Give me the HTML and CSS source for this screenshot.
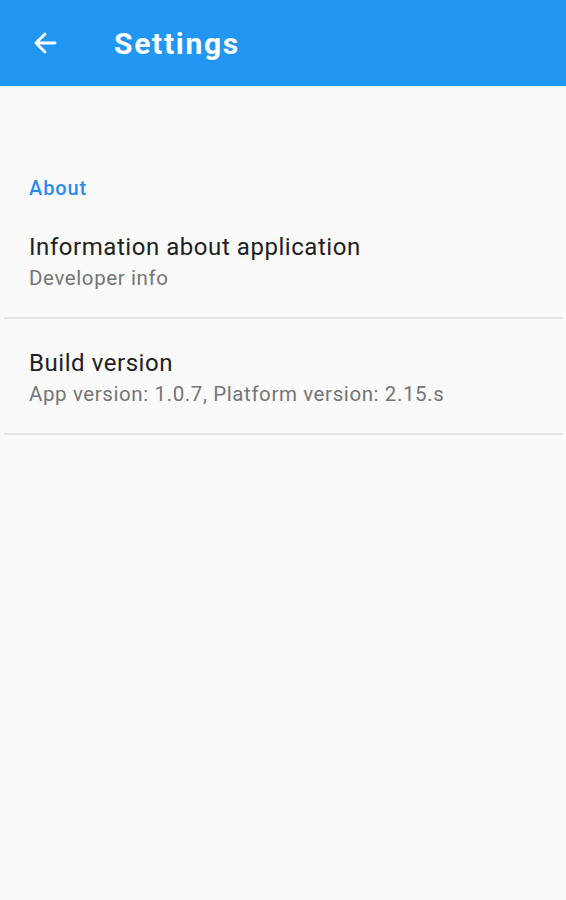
FILE: index.html
```html
<!DOCTYPE html>
<html>
<head>
  <meta charset="UTF-8">
  <meta name="viewport" content="width=device-width, initial-scale=1.0">
  <title>Settings</title>
  <link rel="stylesheet" href="styles.css">
</head>
<body>
  <div class="toolbar">
    <button class="back-btn" aria-label="Back">
      <svg width="32" height="32" viewBox="0 0 24 24">
        <path d="M19.5 12H5.2M12 5.2L5.2 12l6.8 6.8" fill="none" stroke="#fff" stroke-width="2.1" stroke-linecap="round" stroke-linejoin="round"/>
      </svg>
    </button>
    <h1>Settings</h1>
  </div>

  <div class="content">
    <div class="section-title">About</div>

    <div class="pref-item">
      <div class="pref-title">Information about application</div>
      <div class="pref-summary">Developer info</div>
    </div>

    <div class="pref-item">
      <div class="pref-title">Build version</div>
      <div class="pref-summary">App version: 1.0.7, Platform version: 2.15.s</div>
    </div>
  </div>
</body>
</html>
```

FILE: styles.css
```css
body {
  margin: 0;
  background-color: #fafafa;
  font-family: Roboto, 'Noto Sans', sans-serif;
  height: 900px;
}

.toolbar {
  display: flex;
  align-items: center;
  height: 86px;
  background-color: #2196f3;
  color: #fff;
}

.back-btn {
  background: none;
  border: none;
  padding: 0;
  margin: 0 0 0 29px;
  width: 32px;
  height: 32px;
  display: flex;
  align-items: center;
  justify-content: center;
  cursor: pointer;
}

.toolbar h1 {
  margin: 0 0 0 53px;
  font-size: 30px;
  font-weight: 700;
  letter-spacing: 1.7px;
}

.content {
  padding: 88px 3px 0 4px;
}

.section-title {
  padding-left: 25px;
  font-size: 20px;
  line-height: 28px;
  font-weight: 500;
  letter-spacing: 0.9px;
  color: #2a8bf2;
  margin-bottom: 1px;
}

.pref-item {
  padding: 28px 25px 24px 25px;
  border-bottom: 2px solid #e4e4e4;
}

.pref-title {
  font-size: 24px;
  line-height: 32px;
  letter-spacing: 0.55px;
  color: #212121;
}

.pref-summary {
  font-size: 20.5px;
  line-height: 30px;
  letter-spacing: 0.6px;
  color: #757575;
}
```
